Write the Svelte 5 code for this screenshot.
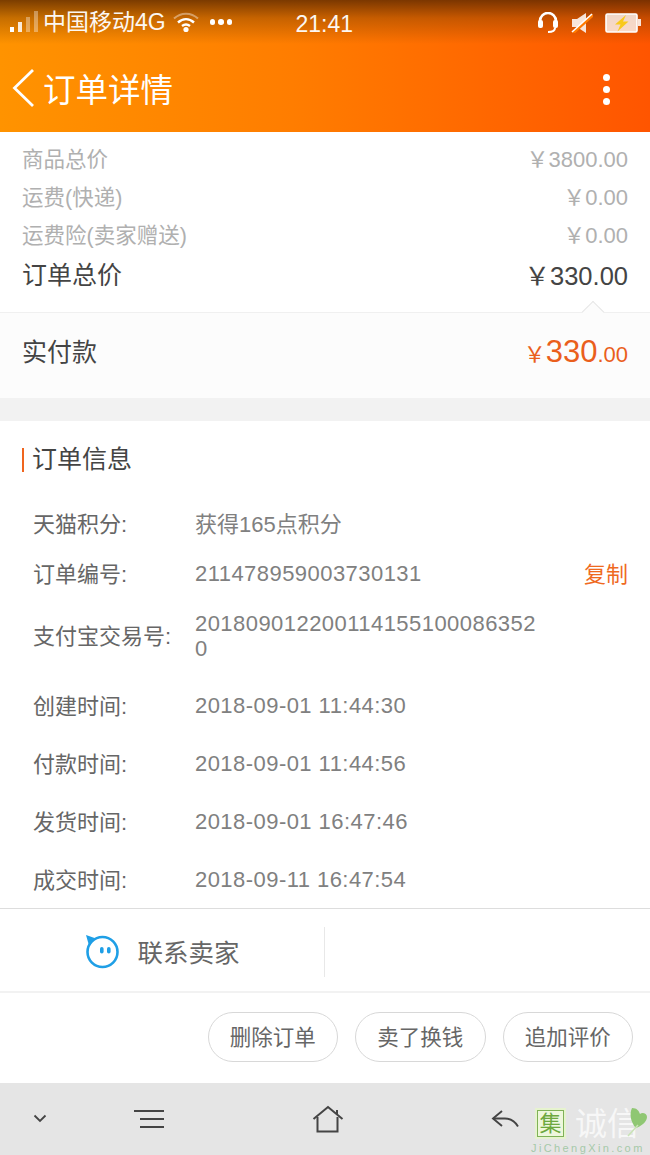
<script>
	const prices = [
		{ label: '商品总价', value: '3800.00' },
		{ label: '运费(快递)', value: '0.00' },
		{ label: '运费险(卖家赠送)', value: '0.00' }
	];

	const times = [
		{ label: '创建时间:', value: '2018-09-01 11:44:30' },
		{ label: '付款时间:', value: '2018-09-01 11:44:56' },
		{ label: '发货时间:', value: '2018-09-01 16:47:46' },
		{ label: '成交时间:', value: '2018-09-11 16:47:54' }
	];

	const actions = ['删除订单', '卖了换钱', '追加评价'];
</script>

<div class="page">
	<header class="header">
		<div class="status">
			<div class="status-left">
				<svg class="signal" width="28" height="24" viewBox="0 0 28 24">
					<rect x="0" y="17" width="4" height="5" fill="#fff" />
					<rect x="8" y="12" width="4" height="10" fill="#fff" opacity="0.85" />
					<rect x="16" y="7" width="4" height="15" fill="#fff" opacity="0.35" />
					<rect x="24" y="1" width="4" height="21" fill="#fff" opacity="0.35" />
				</svg>
				<span class="carrier">中国移动4G</span>
				<svg class="wifi" width="26" height="22" viewBox="0 0 26 22" fill="none" stroke="#fff">
					<path d="M1 7.5C8 1 18 1 25 7.5" stroke-width="2" opacity="0.4" />
					<path d="M5 11.5C10 7 16 7 21 11.5" stroke-width="2.4" />
					<path d="M9 15C11.5 13 14.5 13 17 15" stroke-width="2.4" />
					<circle cx="13" cy="18.5" r="2.6" fill="#fff" stroke="none" />
				</svg>
				<span class="dots">
					<i></i><i></i><i></i>
				</span>
			</div>
			<span class="clock">21:41</span>
			<div class="status-right">
				<svg width="22" height="22" viewBox="0 0 22 22" fill="none" stroke="#fff">
					<path d="M3 12V9a8 8 0 0 1 16 0v3" stroke-width="2.6" />
					<rect x="1" y="8" width="5" height="8" rx="2" fill="#fff" stroke="none" />
					<rect x="16" y="8" width="5" height="8" rx="2" fill="#fff" stroke="none" />
					<path d="M18 16c0 3-3 4-7 4" stroke-width="2" />
				</svg>
				<svg class="mute" width="22" height="20" viewBox="0 0 22 20">
					<path d="M1 6h5l9-6v20l-9-6H1z" fill="#fff" opacity="0.85" />
					<path d="M2 20L22 2" stroke="#ff7a00" stroke-width="3" />
					<path d="M1 19L21 1" stroke="#fff" stroke-width="1.6" />
				</svg>
				<svg class="battery" width="36" height="20" viewBox="0 0 36 20">
					<rect x="1" y="1" width="31" height="18" rx="1.5" fill="#fff" fill-opacity="0.78" stroke="#fff" stroke-width="1.6" />
					<rect x="33" y="6" width="3" height="7" fill="#fff" opacity="0.85" />
					<path d="M21 2l-11 9.500h5.500l-3 7 11-10h-5.500z" fill="#f8c91c" />
				</svg>
			</div>
		</div>
		<div class="toolbar">
			<svg class="back" width="24" height="40" viewBox="0 0 24 40" fill="none" stroke="#fff" stroke-width="2.8">
				<path d="M21 2L2.5 20 21 38" />
			</svg>
			<h1>订单详情</h1>
			<div class="more"><i></i><i></i><i></i></div>
		</div>
	</header>

	<section class="prices">
		{#each prices as row}
			<div class="price-row">
				<span>{row.label}</span>
				<span class="amount">￥{row.value}</span>
			</div>
		{/each}
		<div class="price-row total">
			<span>订单总价</span>
			<span class="amount">￥330.00</span>
		</div>
	</section>

	<section class="paid">
		<span class="caret"></span>
		<span class="paid-label">实付款</span>
		<span class="paid-value"><small>￥</small>330<small>.00</small></span>
	</section>

	<section class="info">
		<h2>订单信息</h2>
		<div class="info-row first">
			<span class="key">天猫积分:</span>
			<span class="val cjk">获得165点积分</span>
		</div>
		<div class="info-row order-no">
			<span class="key">订单编号:</span>
			<span class="val">211478959003730131</span>
			<span class="copy">复制</span>
		</div>
		<div class="info-row alipay">
			<span class="key">支付宝交易号:</span>
			<span class="val wrap">2018090122001141551000863520</span>
		</div>
		{#each times as row}
			<div class="info-row time">
				<span class="key">{row.label}</span>
				<span class="val">{row.value}</span>
			</div>
		{/each}
	</section>

	<section class="contact">
		<div class="contact-cell">
			<svg width="36" height="36" viewBox="0 0 36 36" fill="none">
				<circle cx="18.5" cy="19" r="15" stroke="#1f9fe6" stroke-width="2.6" />
				<path d="M2 2l10 3.500-7 7z" fill="#1f9fe6" />
				<rect x="16" y="14" width="3.600" height="6.500" rx="1.800" fill="#1f9fe6" />
				<rect x="23" y="14" width="3.600" height="6.500" rx="1.800" fill="#1f9fe6" />
			</svg>
			<span>联系卖家</span>
		</div>
		<div class="contact-cell empty"></div>
	</section>

	<section class="actions">
		{#each actions as action}
			<button type="button">{action}</button>
		{/each}
	</section>

	<nav class="navbar">
		<svg class="n-chevron" width="14" height="9" viewBox="0 0 14 9" fill="none" stroke="#444" stroke-width="1.8">
			<path d="M1.500 1.500l5.500 5.500 5.500-5.500" />
		</svg>
		<svg class="n-menu" width="30" height="20" viewBox="0 0 30 20" stroke="#444" stroke-width="2.2">
			<path d="M0 2h30M6 10h24M6 18h24" />
		</svg>
		<svg class="n-home" width="32" height="28" viewBox="0 0 32 28" fill="none" stroke="#444" stroke-width="2">
			<path d="M1.500 14L16 2l14.500 12" />
			<path d="M5.500 12v14.500h20V12" />
			<path d="M25 5v5" />
		</svg>
		<svg class="n-back" width="30" height="20" viewBox="0 0 30 20" fill="none" stroke="#444" stroke-width="1.900">
			<path d="M11 1L2 8.500l9 7.500" />
			<path d="M2 8.500h12c6 0 10 3 13 8" />
		</svg>
		<div class="mark">
			<span class="mark-box">集</span>
			<span class="mark-text">诚信</span>
			<svg class="mark-leaf" width="20" height="30" viewBox="0 0 20 30" fill="none">
				<path d="M5 0c5 0 7 3 8 6 2-2 7-1 7 3 0 5-6 9-11 11C4 15 2 6 5 0z" fill="#8fc773" />
				<path d="M11 17L1 28" stroke="#c9e3b5" stroke-width="1.500" />
			</svg>
			<span class="mark-sub">JiChengXin.com</span>
		</div>
	</nav>
</div>

<style>
	:global(body) {
		margin: 0;
		background: #fff;
	}

	.page {
		width: 650px;
		height: 1155px;
		overflow: hidden;
		display: flex;
		flex-direction: column;
		font-family: 'Liberation Sans', 'Noto Sans CJK SC', sans-serif;
		color: #444;
	}

	.header {
		height: 132px;
		flex: none;
		box-sizing: border-box;
		color: #fff;
		background:
			linear-gradient(180deg, rgba(90, 40, 0, 0.8) 0, rgba(120, 60, 0, 0.42) 18px, rgba(255, 140, 0, 0) 44px),
			linear-gradient(90deg, #ff9300 0, #ff7d00 45%, #ff5500 100%);
	}

	.status {
		height: 46px;
		display: flex;
		align-items: center;
		position: relative;
		padding: 0 10px 2px;
		box-sizing: border-box;
	}

	.status-left {
		display: flex;
		align-items: center;
		gap: 5px;
	}

	.carrier {
		font-size: 23px;
		line-height: 28px;
		opacity: 0.95;
	}

	.wifi {
		margin-left: 2px;
	}

	.dots {
		display: flex;
		gap: 3px;
		margin-left: 6px;
	}

	.dots i {
		width: 5.500px;
		height: 5.500px;
		border-radius: 50%;
		background: #fff;
	}

	.clock {
		position: absolute;
		left: 295.500px;
		top: 10px;
		font-size: 23px;
		line-height: 28px;
		opacity: 0.95;
	}

	.status-right {
		margin-left: auto;
		display: flex;
		align-items: center;
		gap: 12px;
		position: relative;
		left: 1px;
		top: 1px;
	}

	.toolbar {
		height: 86px;
		display: flex;
		align-items: center;
		padding: 0 40px 0 12px;
	}

	.back {
		margin-right: 7px;
		position: relative;
		top: -1px;
	}

	.toolbar h1 {
		margin: 0;
		font-size: 32.500px;
		line-height: 40px;
		font-weight: 400;
		position: relative;
		top: 2px;
	}

	.more {
		margin-left: auto;
		display: flex;
		flex-direction: column;
		gap: 5px;
	}

	.more i {
		width: 7px;
		height: 7px;
		border-radius: 50%;
		background: #fff;
	}

	.prices {
		height: 181px;
		flex: none;
		box-sizing: border-box;
		padding: 6px 22px 0;
		border-bottom: 1px solid #f0f0f0;
	}

	.price-row {
		height: 38px;
		display: flex;
		justify-content: space-between;
		align-items: center;
		font-size: 21.500px;
		color: #b0b0b0;
	}

	.amount {
		font-size: 22px;
	}

	.price-row.total {
		height: 42px;
		font-size: 25px;
		color: #444;
	}

	.total .amount {
		font-size: 25.500px;
	}

	.paid {
		height: 85px;
		flex: none;
		position: relative;
		display: flex;
		align-items: center;
		justify-content: space-between;
		box-sizing: border-box;
		padding: 0 22px 7px;
		background: #fcfcfc;
	}

	.caret {
		position: absolute;
		top: -9px;
		left: 585px;
		width: 15px;
		height: 15px;
		transform: rotate(45deg);
		background: #fcfcfc;
		border-top: 1px solid #e6e6e6;
		border-left: 1px solid #e6e6e6;
	}

	.paid-label {
		font-size: 25px;
		position: relative;
		top: -2px;
	}

	.paid-value {
		font-size: 31px;
		color: #ea5f1c;
	}

	.paid-value small {
		font-size: 22px;
	}

	.info {
		flex: none;
		height: 488px;
		box-sizing: border-box;
		margin-top: 23px;
		border-bottom: 1px solid #ddd;
		box-shadow: 0 -23px 0 #f2f2f2;
	}

	.info h2 {
		margin: 27px 0 0 22px;
		padding-left: 8px;
		height: 24px;
		line-height: 22px;
		font-size: 25px;
		font-weight: 400;
		border-left: 2px solid #f0651e;
		color: #444;
	}

	.info-row {
		display: flex;
		align-items: center;
		padding: 0 22px 0 33px;
		font-size: 22px;
		color: #666;
	}

	.key {
		width: 162px;
		flex: none;
		color: #666;
		position: relative;
		top: -2px;
	}

	.val {
		color: #808080;
		letter-spacing: 0.450px;
	}

	.val.cjk {
		position: relative;
		top: -2px;
		letter-spacing: 0;
	}

	.first {
		height: 58px;
		margin-top: 23px;
	}

	.order-no {
		height: 42px;
	}

	.alipay {
		height: 82px;
	}

	.wrap {
		width: 345px;
		word-break: break-all;
		line-height: 25px;
	}

	.time {
		height: 58px;
	}

	.copy {
		margin-left: auto;
		color: #ef6a1f;
		position: relative;
		top: -2px;
	}

	.contact {
		height: 84px;
		flex: none;
		box-sizing: border-box;
		display: flex;
		align-items: center;
		padding-top: 4px;
		border-bottom: 2px solid #f2f2f2;
	}

	.contact-cell {
		width: 325px;
		height: 50px;
		box-sizing: border-box;
		display: flex;
		align-items: center;
		justify-content: center;
		gap: 17px;
		border-right: 1px solid #e8e8e8;
		font-size: 25.500px;
		color: #666;
	}

	.contact-cell svg {
		position: relative;
		top: -1px;
	}

	.contact-cell span {
		position: relative;
		top: -2px;
	}

	.contact-cell.empty {
		border-right: none;
	}

	.actions {
		height: 90px;
		flex: none;
		display: flex;
		justify-content: flex-end;
		align-items: center;
		gap: 17px;
		padding: 0 17px 2.500px 0;
		box-sizing: border-box;
	}

	.actions button {
		width: 130.500px;
		height: 50.500px;
		border-radius: 26px;
		border: 1px solid #d8d8d8;
		background: #fff;
		font-family: inherit;
		font-size: 21.500px;
		color: #666;
		padding: 0 0 3px;
	}

	.navbar {
		flex: 1;
		background: #e5e5e5;
		position: relative;
	}

	.navbar svg {
		position: absolute;
	}

	.n-chevron {
		left: 33px;
		top: 31px;
	}

	.n-menu {
		left: 134px;
		top: 26px;
	}

	.n-home {
		left: 312px;
		top: 22px;
	}

	.n-back {
		left: 491px;
		top: 27px;
	}

	.mark {
		position: absolute;
		left: 531px;
		top: 25px;
		width: 119px;
		height: 47px;
	}

	.mark-box {
		position: absolute;
		left: 6px;
		top: 2px;
		width: 27px;
		height: 27px;
		line-height: 25px;
		text-align: center;
		font-size: 22px;
		color: #6da83f;
		background: #eef7dc;
		border: 1px solid #7fb257;
		box-shadow: 0 0 0 2px #e6f3cf;
		box-sizing: border-box;
	}

	.mark-text {
		position: absolute;
		left: 44px;
		top: 0;
		font-size: 32px;
		line-height: 33px;
		color: #fff;
		white-space: nowrap;
		opacity: 0.7;
	}

	.navbar .mark-leaf {
		left: 96px;
		top: 0;
	}

	.mark-sub {
		position: absolute;
		left: 0;
		top: 34px;
		font-size: 11px;
		line-height: 13px;
		letter-spacing: 2.400px;
		color: #a5c9a9;
		white-space: nowrap;
	}
</style>
